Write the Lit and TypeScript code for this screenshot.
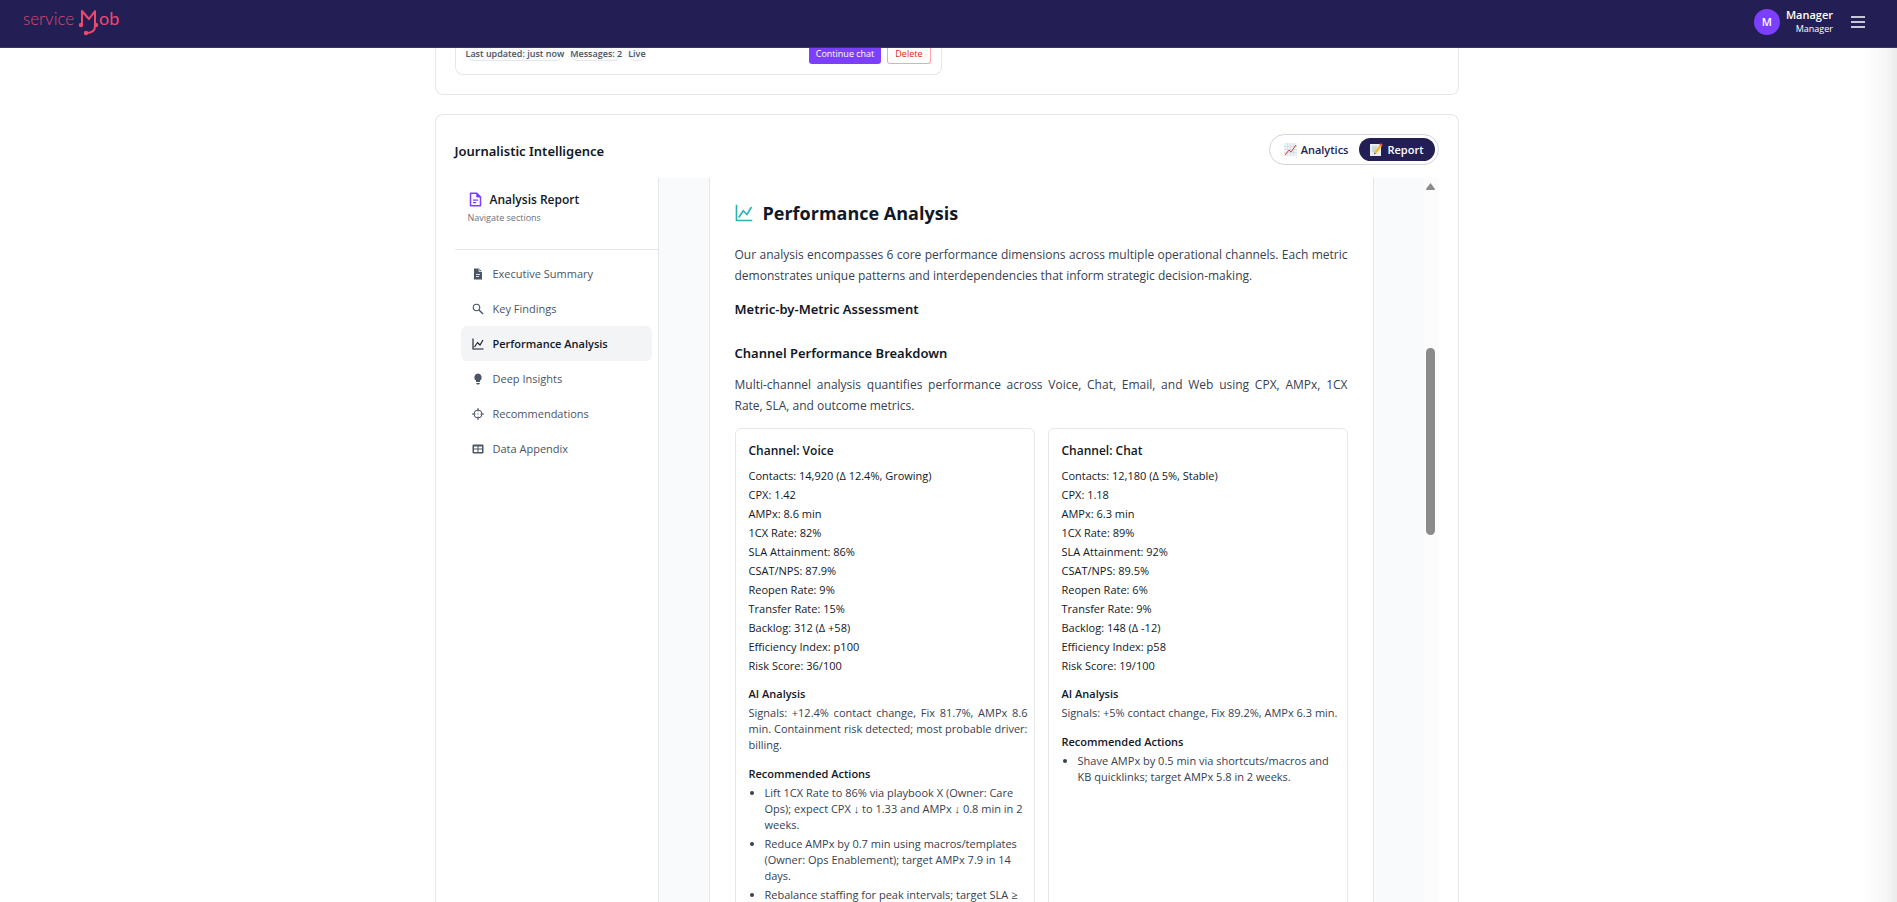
import { LitElement, html, css, svg } from "lit";
import { customElement, state } from "lit/decorators.js";

const paths: Record<string, unknown> = {
  doc: svg`<path fill="currentColor" d="M4 1h10l6 6v16H4z"/><path d="M14 1v6h6M8 13h8M8 17h6" stroke="#fff" stroke-width="1.6" fill="none"/>`,
  search: svg`<circle cx="9" cy="9" r="6.500" fill="none" stroke="currentColor" stroke-width="2.200"/><path d="M14 14l8 8" stroke="currentColor" stroke-width="2.800"/>`,
  chart: svg`<path d="M2 1v21h21M5 18l6-9 5 5 6-10" fill="none" stroke="currentColor" stroke-width="2.2"/>`,
  bulb: svg`<path fill="currentColor" d="M12 1a8 8 0 0 0-4 14.500v2.500h8v-2.500A8 8 0 0 0 12 1zM8.500 20h7v1.500l-2 1.500h-3l-2-1.500z"/>`,
  target: svg`<circle cx="12" cy="12" r="8" fill="none" stroke="currentColor" stroke-width="2"/><path d="M12 0v7M12 17v7M0 12h7M17 12h7M11 12h2" stroke="currentColor" stroke-width="2" fill="none"/>`,
  table: svg`<path fill-rule="evenodd" fill="currentColor" d="M3 3h18q2 0 2 2v14q0 2-2 2H3q-2 0-2-2V5q0-2 2-2zM4 7v4h7V7zM13 7v4h7V7zM4 13v5h7v-5zM13 13v5h7v-5z"/>`,
  report: svg`<path d="M4 2h10l6 6v14H4z" fill="none" stroke="currentColor" stroke-width="2.400" stroke-linejoin="round"/><path d="M14 2v6h6z" fill="currentColor" stroke="currentColor" stroke-width="1.500"/><path d="M8 13h8M8 17h5" stroke="currentColor" stroke-width="2"/>`,
};

const icon = (name: string) => html`<svg class="icon" viewBox="0 0 24 24" aria-hidden="true">${paths[name]}</svg>`;

const sections = [
  ["doc", "Executive Summary"],
  ["search", "Key Findings"],
  ["chart", "Performance Analysis"],
  ["bulb", "Deep Insights"],
  ["target", "Recommendations"],
  ["table", "Data Appendix"],
];

interface Channel {
  name: string;
  metrics: string[];
  analysis: string;
  actions: string[];
}

const channels: Channel[] = [
  {
    name: "Voice",
    metrics: [
      "Contacts: 14,920 (Δ 12.4%, Growing)", "CPX: 1.42", "AMPx: 8.6 min", "1CX Rate: 82%", "SLA Attainment: 86%",
      "CSAT/NPS: 87.9%", "Reopen Rate: 9%", "Transfer Rate: 15%", "Backlog: 312 (Δ +58)", "Efficiency Index: p100", "Risk Score: 36/100",
    ],
    analysis: "Signals: +12.4% contact change, Fix 81.7%, AMPx 8.6 min. Containment risk detected; most probable driver: billing.",
    actions: [
      "Lift 1CX Rate to 86% via playbook X (Owner: Care Ops); expect CPX ↓ to 1.33 and AMPx ↓ 0.8 min in 2 weeks.",
      "Reduce AMPx by 0.7 min using macros/templates (Owner: Ops Enablement); target AMPx 7.9 in 14 days.",
      "Rebalance staffing for peak intervals; target SLA ≥",
    ],
  },
  {
    name: "Chat",
    metrics: [
      "Contacts: 12,180 (Δ 5%, Stable)", "CPX: 1.18", "AMPx: 6.3 min", "1CX Rate: 89%", "SLA Attainment: 92%",
      "CSAT/NPS: 89.5%", "Reopen Rate: 6%", "Transfer Rate: 9%", "Backlog: 148 (Δ -12)", "Efficiency Index: p58", "Risk Score: 19/100",
    ],
    analysis: "Signals: +5% contact change, Fix 89.2%, AMPx 6.3 min.",
    actions: ["Shave AMPx by 0.5 min via shortcuts/macros and KB quicklinks; target AMPx 5.8 in 2 weeks."],
  },
];

@customElement("app-root")
export class AppRoot extends LitElement {
  @state() private active = 2;
  @state() private view = "Report";

  static styles = css`
    :host {
      display: flex;
      flex-direction: column;
      height: 100vh;
      overflow: hidden;
      background: #fff;
      color: #111827;
      font: 11px/16px "Segoe UI", "Open Sans", "Noto Sans", sans-serif;
    }
    * { box-sizing: border-box; }
    h1, h2, h3, h4, h5, p, ul { margin: 0; padding: 0; }
    button { font: inherit; color: inherit; cursor: pointer; }
    .icon { display: block; width: 12px; height: 12px; flex: none; }

    .topbar {
      flex: none;
      display: flex;
      align-items: center;
      justify-content: space-between;
      height: 48px;
      padding: 0 28px 4px 22px;
      background: #231f55;
      border-bottom: 1px solid #3a3466;
      color: #fff;
    }
    .logo { display: block; width: 100px; height: 30px; }
    .user { display: flex; align-items: center; gap: 6px; }
    .avatar {
      display: grid;
      place-items: center;
      width: 26px;
      height: 26px;
      border-radius: 50%;
      background: #7c3fff;
      font-weight: 600;
    }
    .who { text-align: right; font-size: 9px; line-height: 14px; font-weight: 500; }
    .who strong { display: block; font-size: 11px; font-weight: 600; }
    .menu { display: block; margin-left: 8px; padding: 2px; border: 0; background: none; }
    .menu svg { display: block; width: 18px; height: 16px; }

    .page {
      flex: 1;
      min-height: 0;
      overflow: hidden;
      display: flex;
      flex-direction: column;
      align-items: center;
      gap: 19px;
      padding-right: 4px;
      background: linear-gradient(to left, #ebebeb, #f7f7f7 12px, #fff 36px);
    }
    .panel {
      width: 100%;
      max-width: 1024px;
      padding: 0 19px;
      border: 1px solid #e5e7eb;
      border-radius: 8px;
      background: #fff;
    }
    .history { flex: none; padding-bottom: 19px; border-top: 0; border-radius: 0 0 8px 8px; }
    .chat {
      display: flex;
      align-items: flex-start;
      gap: 6px;
      width: calc(50% - 5px);
      height: 27px;
      padding: 0 10px;
      border: 1px solid #e5e7eb;
      border-top: 0;
      border-radius: 0 0 8px 8px;
    }
    .tag {
      height: 13px;
      border-bottom: 1px solid #e5e7eb;
      border-radius: 0 0 8px 8px;
      background: #f9fafb;
      color: #4b5563;
      font-size: 9px;
      line-height: 12px;
      font-weight: 600;
    }
    .act {
      height: 16px;
      padding: 0 7px 4px;
      border: 0;
      border-radius: 0 0 3px 3px;
      font-size: 9px;
      line-height: 12px;
      font-weight: 500;
      background: #7c3fff;
      color: #fff;
    }
    .act.first { margin-left: auto; }
    .act.danger { background: #fff; color: #dc2626; border: 1px solid #fca5a5; border-top: 0; }

    .journal {
      flex: 1;
      min-height: 0;
      display: flex;
      flex-direction: column;
      border-bottom: 0;
      border-radius: 8px 8px 0 0;
    }
    .journal-head {
      flex: none;
      display: flex;
      align-items: center;
      justify-content: space-between;
      padding: 19px 0 13px;
    }
    .journal-head h1, .paper h3 {
      font-family: "Segoe UI", "Noto Sans", sans-serif;
      font-size: 13px;
      line-height: 20px;
      font-weight: 600;
    }
    .journal-head h1 { padding-top: 3px; }
    .switch {
      display: flex;
      padding: 3px;
      border: 1px solid #d1d5db;
      border-radius: 16px;
    }
    .switch button {
      display: flex;
      align-items: center;
      gap: 4px;
      height: 23px;
      padding: 0 11px;
      border: 0;
      border-radius: 12px;
      background: none;
      color: #231f55;
      font-weight: 600;
    }
    .switch .on { background: #231f55; color: #fff; }
    .switch svg { display: block; width: 13px; height: 13px; }

    .report { flex: 1; min-height: 0; display: flex; }
    .side { flex: none; width: 204px; border-right: 1px solid #e5e7eb; }
    .side-head { height: 72px; padding: 13px; border-bottom: 1px solid #e5e7eb; }
    .side-head h2 {
      display: flex;
      align-items: center;
      gap: 7px;
      font-size: 12px;
      line-height: 17px;
      font-weight: 600;
    }
    .side-head .icon { width: 15px; height: 15px; color: #7c3fff; }
    .side-head p { font-size: 9px; line-height: 19px; color: #6b7280; }
    .nav { display: grid; padding: 6px; }
    .nav button {
      display: flex;
      align-items: center;
      gap: 9px;
      height: 35px;
      padding: 0 11px;
      border: 0;
      border-radius: 6px;
      background: none;
      color: #4b5563;
      text-align: left;
    }
    .nav .on { background: #f3f4f6; color: #111827; font-weight: 600; }

    .scroll { flex: 1; min-width: 0; display: flex; background: #f9fafb; }
    .gutter { flex: 1; overflow: hidden; display: flex; justify-content: center; }
    .paper {
      width: 665px;
      height: max-content;
      min-height: 100%;
      padding: 23px 25px;
      border: solid #e5e7eb;
      border-width: 0 1px;
      background: #fff;
    }
    .paper h2 {
      display: flex;
      align-items: center;
      gap: 10px;
      margin-bottom: 19px;
      font-size: 18px;
      line-height: 24px;
      font-weight: 700;
    }
    .paper h2 .icon { width: 18px; height: 18px; color: #2bb3b1; }
    .lead { font-size: 12px; line-height: 21px; text-align: justify; color: #374151; }
    .paper h3.first { margin: 13px 0 24px; }
    .paper h3.second { margin-bottom: 11px; }
    .cards { display: grid; grid-template-columns: 1fr 1fr; gap: 13px; margin-top: 12px; }
    .card { padding: 13px 6px 13px 13px; border: 1px solid #e5e7eb; border-radius: 6px; }
    .card h4 { margin-bottom: 7px; font-size: 12px; line-height: 17px; font-weight: 600; }
    .card h5 { margin-bottom: 3px; font-size: 11px; line-height: 16px; font-weight: 600; }
    .card p { margin-bottom: 13px; text-align: justify; color: #374151; }
    .metrics { margin-bottom: 11px; list-style: none; line-height: 19px; }
    .actions { padding-left: 16px; color: #374151; }
    .actions li { margin-bottom: 3px; }

    .bar { flex: none; width: 15px; padding: 5px 4px 5px 2px; background: #fcfcfc; }
    .bar svg { display: block; width: 9px; height: 7px; }
    .thumb { width: 9px; height: 187px; margin-top: 158px; border-radius: 5px; background: #8b8b8b; }
  `;

  render() {
    return html`
      <header class="topbar">
        <svg class="logo" viewBox="0 0 100 30" role="img" aria-label="serviceMob" fill="#ec4a6c">
          <text x="1" y="18" font-family="Lato, sans-serif" font-weight="300" font-size="17" fill="#dc486c">service</text>
          <g fill="none" stroke="#ec4a6c" stroke-width="2" stroke-linecap="round" stroke-linejoin="round">
            <path d="M60 18V4l7 8 6-8v15q0 7-9 7"/>
          </g>
          <circle cx="59" cy="18" r="2.200"/><circle cx="74" cy="18" r="2.200"/><circle cx="64" cy="26" r="2.200"/>
          <text x="77" y="18" font-family="Lato, sans-serif" font-size="18">ob</text>
        </svg>
        <div class="user">
          <span class="avatar">M</span>
          <div class="who"><strong>Manager</strong>Manager</div>
          <button class="menu" aria-label="Open menu">
            <svg viewBox="0 0 18 16"><path d="M2 3h14M2 8h14M2 13h14" stroke="#fff" stroke-width="1.500"/></svg>
          </button>
        </div>
      </header>
      <main class="page">
        <section class="panel history">
          <div class="chat">
            <span class="tag">Last updated: just now</span><span class="tag">Messages: 2</span><span class="tag">Live</span>
            <button class="act first">Continue chat</button>
            <button class="act danger">Delete</button>
          </div>
        </section>
        <section class="panel journal">
          <div class="journal-head">
            <h1>Journalistic Intelligence</h1>
            <div class="switch">
              <button class=${this.view === "Analytics" ? "on" : ""} @click=${() => (this.view = "Analytics")}>
                <svg viewBox="0 0 13 13"><path fill="#eef1f4" d="M0 0h13v13H0z"/><path d="M0 3.500h13M0 6.500h13M0 9.500h13M3.500 0v13M6.500 0v13M9.500 0v13" stroke="#cfd8de" stroke-width=".6"/><path d="M1 12l4-5 2 2 5-7" fill="none" stroke="#e0393e" stroke-width="1"/></svg>
                Analytics
              </button>
              <button class=${this.view === "Report" ? "on" : ""} @click=${() => (this.view = "Report")}>
                <svg viewBox="0 0 13 13"><path fill="#e6eef3" d="M0 1h11v12H0z"/><path d="M2 4h5M2 6h4M2 8h3" stroke="#9fb4c0" stroke-width=".8"/><path d="M5 10l6-8" stroke="#f7b82d" stroke-width="2.600"/><path d="M10.500 2.500l1.200-1.600" stroke="#e8504f" stroke-width="2.600"/><path d="M4 11.500l.3-2 1.500 1z" fill="#444"/></svg>
                Report
              </button>
            </div>
          </div>
          <div class="report">
            <aside class="side">
              <div class="side-head">
                <h2>${icon("report")}Analysis Report</h2>
                <p>Navigate sections</p>
              </div>
              <nav class="nav">
                ${sections.map(
                  ([glyph, label], i) => html`<button class=${i === this.active ? "on" : ""} @click=${() => (this.active = i)}>${icon(glyph)}${label}</button>`
                )}
              </nav>
            </aside>
            <div class="scroll">
              <div class="gutter">
                <article class="paper">
                  <h2>${icon("chart")}Performance Analysis</h2>
                  <p class="lead">Our analysis encompasses 6 core performance dimensions across multiple operational channels. Each metric demonstrates unique patterns and interdependencies that inform strategic decision-making.</p>
                  <h3 class="first">Metric-by-Metric Assessment</h3>
                  <h3 class="second">Channel Performance Breakdown</h3>
                  <p class="lead">Multi-channel analysis quantifies performance across Voice, Chat, Email, and Web using CPX, AMPx, 1CX Rate,&nbsp;SLA, and outcome metrics.</p>
                  <div class="cards">
                    ${channels.map(
                      (c) => html`<section class="card">
                        <h4>Channel: ${c.name}</h4>
                        <ul class="metrics">${c.metrics.map((m) => html`<li>${m}</li>`)}</ul>
                        <h5>AI Analysis</h5>
                        <p>${c.analysis}</p>
                        <h5>Recommended Actions</h5>
                        <ul class="actions">${c.actions.map((a) => html`<li>${a}</li>`)}</ul>
                      </section>`
                    )}
                  </div>
                </article>
              </div>
              <div class="bar" aria-hidden="true">
                <svg viewBox="0 0 9 7"><path d="M4.500 0L9 6q0 1-1 1H1Q0 7 0 6z" fill="#8b8b8b"/></svg>
                <div class="thumb"></div>
              </div>
            </div>
          </div>
        </section>
      </main>
    `;
  }
}
